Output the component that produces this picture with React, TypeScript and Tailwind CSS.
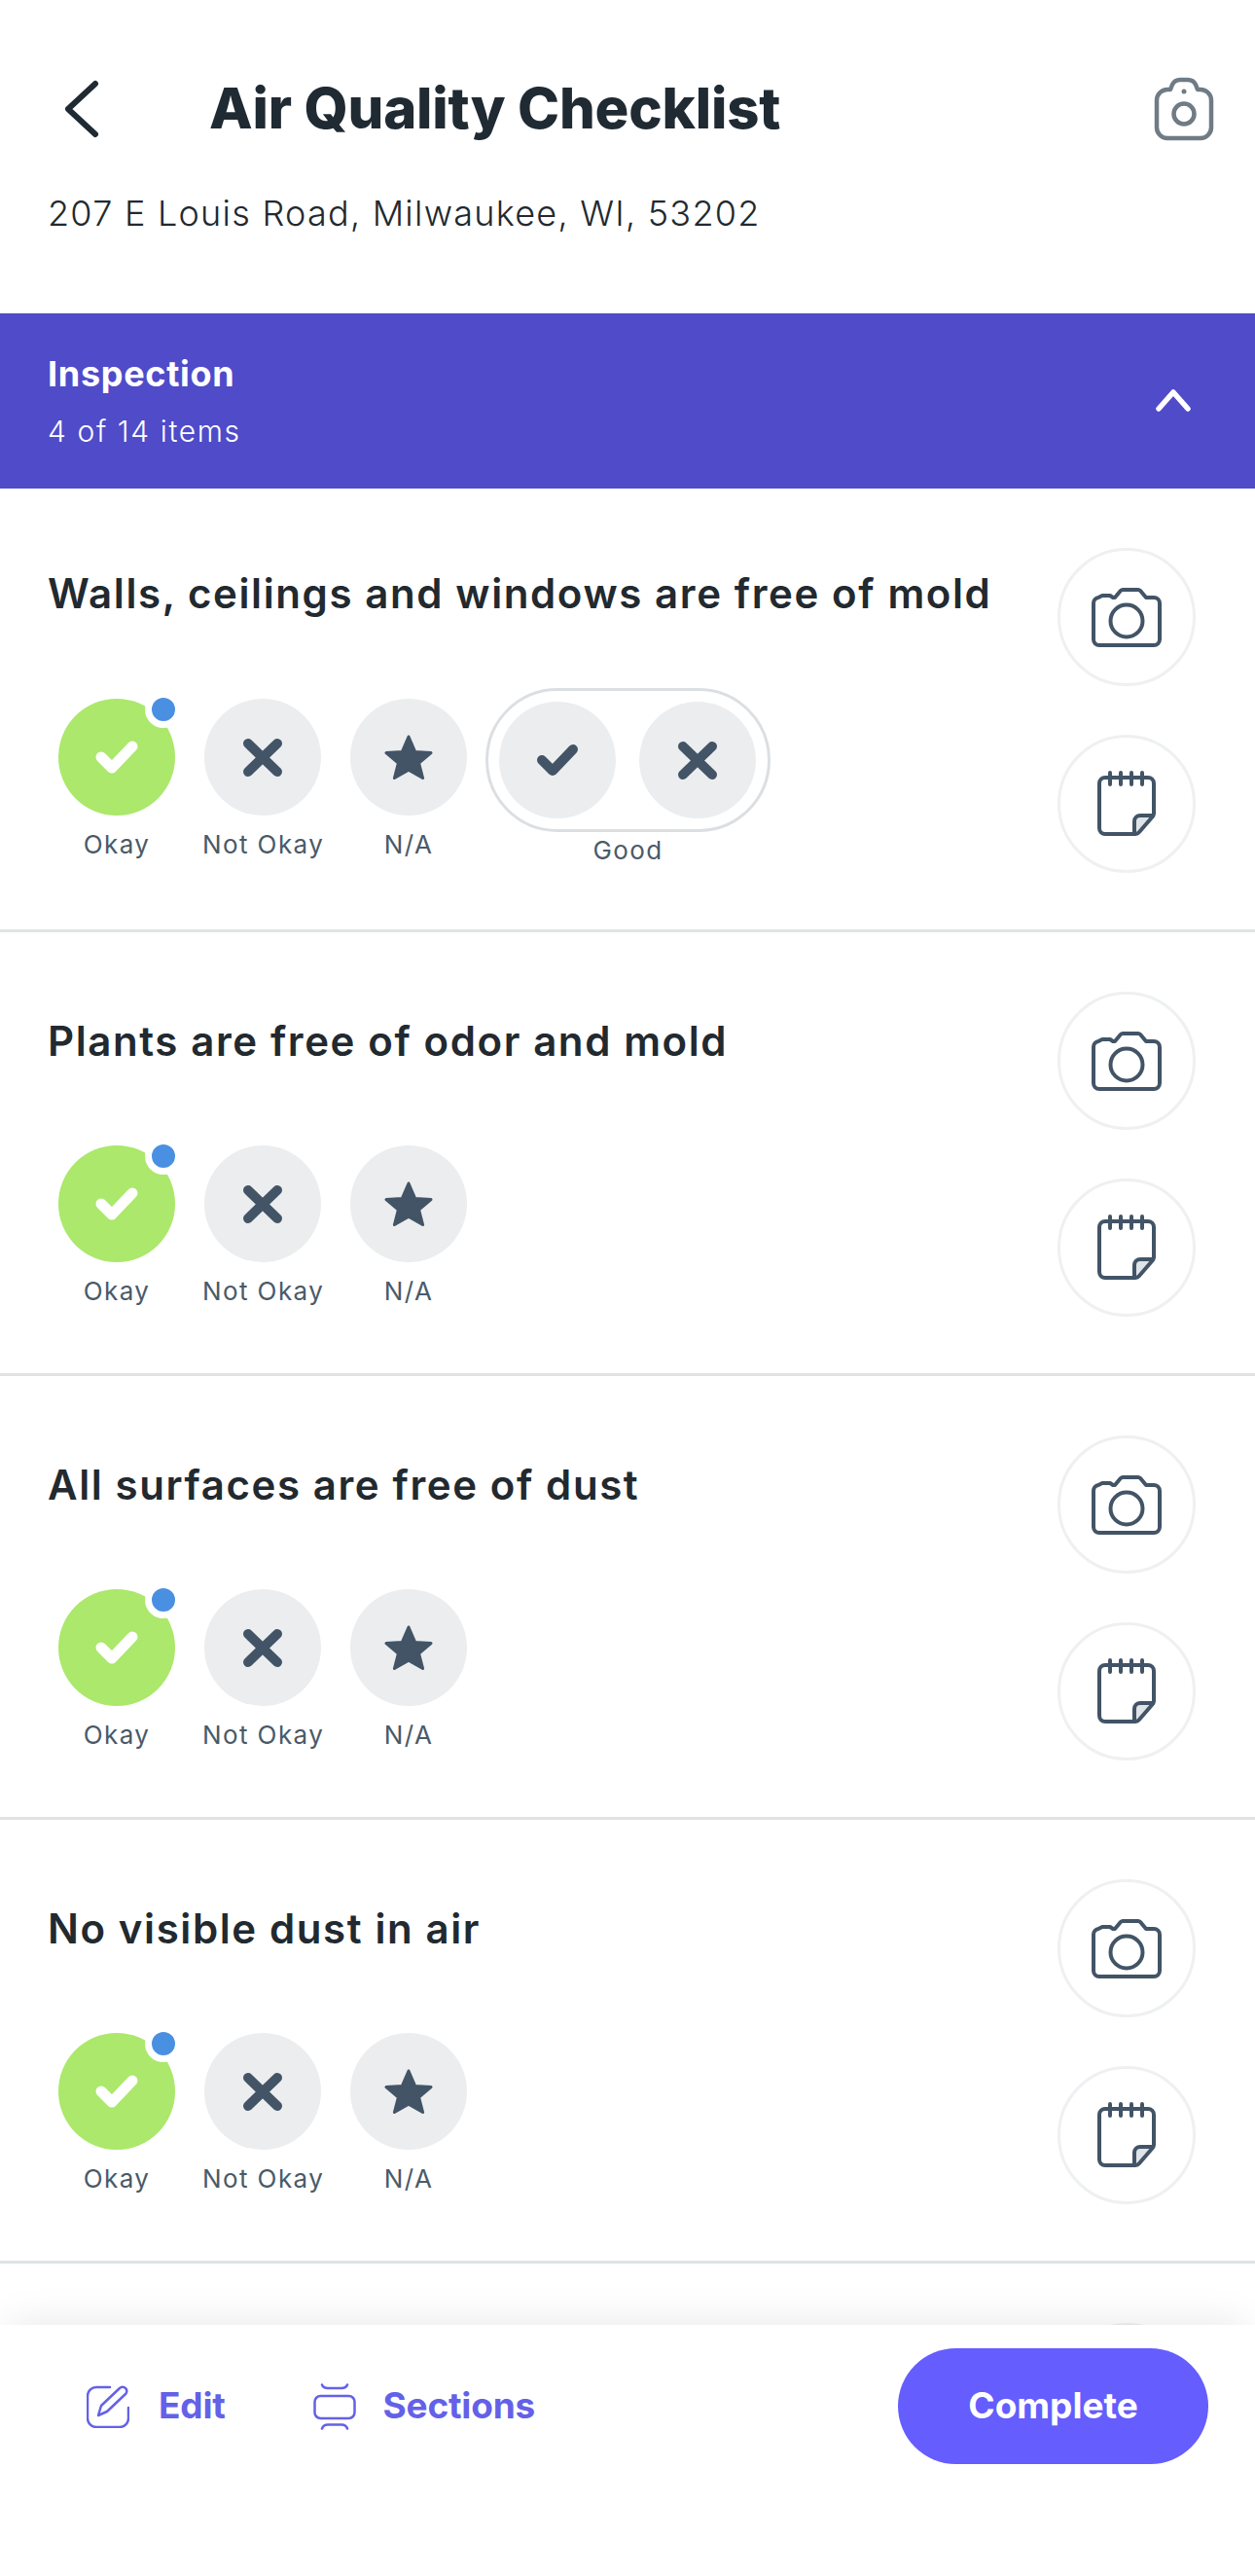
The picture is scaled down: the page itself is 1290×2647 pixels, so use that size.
import type { ReactNode } from 'react';

const font = "font-['Inter','Noto_Sans',sans-serif]";

function CameraIcon() {
  return (
    <svg width="72" height="61" viewBox="0 0 72 61" fill="none" stroke="#425466" strokeWidth="4" strokeLinejoin="round">
      <path d="M2 16a6 6 0 0 1 5-6l4-2h8l3 2h2l5-6a4 4 0 0 1 3-2h16a4 4 0 0 1 3 2l5 6h8a6 6 0 0 1 6 6v37a6 6 0 0 1-6 6H8a6 6 0 0 1-6-6z" />
      <circle cx="36" cy="34" r="16.5" />
    </svg>
  );
}

function NoteIcon() {
  return (
    <svg width="60" height="68" viewBox="0 0 60 68" fill="none" stroke="#425466" strokeWidth="4" strokeLinecap="round" strokeLinejoin="round">
      <path d="M38 65V52a6 6 0 0 1 6-6h14L42 64l-4 1z" fill="#dfe4e9" stroke="none" />
      <path d="M8 7h44a6 6 0 0 1 6 6v31a6 6 0 0 1-2 4L43 63a6 6 0 0 1-4 2H8a6 6 0 0 1-6-6V13a6 6 0 0 1 6-6z" />
      <path d="M38 64V52a6 6 0 0 1 6-6h13" />
      <path d="M13 2v12M24 2v12M35 2v12M46 2v12" />
    </svg>
  );
}

function CheckIcon({ color, width }: { color: string; width: number }) {
  return (
    <svg width="44" height="34" viewBox="0 0 44 34" fill="none" stroke={color} strokeWidth={width} strokeLinecap="round" strokeLinejoin="round">
      <path d="M6 17l11 11L38 6" />
    </svg>
  );
}

function CrossIcon() {
  return (
    <svg width="42" height="41" viewBox="0 0 42 41" fill="none" stroke="#425466" strokeWidth="10" strokeLinecap="round">
      <path d="M6 6l30 29M36 6L6 35" />
    </svg>
  );
}

function StarIcon() {
  return (
    <svg width="50" height="46" viewBox="0 0 50 46" fill="#425466" stroke="#425466" strokeWidth="3" strokeLinejoin="round">
      <path d="M25 2l6.6 15.4L48 18.6 35.6 29l4 15.5L25 36.2 10.4 44.500l4-15.5L2 18.600l16.400-1.200z" />
    </svg>
  );
}

function Circle({ children, green }: { children: ReactNode; green?: boolean }) {
  return (
    <div className={`w-[120px] h-[120px] rounded-full flex items-center justify-center ${green ? 'bg-[#abe86b]' : 'bg-[#ebedef]'}`}>
      {children}
    </div>
  );
}

function Label({ children }: { children: ReactNode }) {
  return <div className="mt-[14px] -ml-[2px] w-[124px] text-[26px] leading-[32px] tracking-[1.4px] text-[#4a5a68] text-center whitespace-nowrap">{children}</div>;
}

function RoundButton({ children }: { children: ReactNode }) {
  return (
    <div className="w-[142px] h-[142px] rounded-full border-[3px] border-[#eef0f2] flex items-center justify-center">
      {children}
    </div>
  );
}

function SideButtons() {
  return (
    <div className="pt-[61px] flex flex-col gap-[50px]">
      <RoundButton><CameraIcon /></RoundButton>
      <RoundButton><NoteIcon /></RoundButton>
    </div>
  );
}

function ItemCard({ title, titleTop, rowGap, good }: { title: string; titleTop: string; rowGap: string; good?: boolean }) {
  return (
    <div className="h-[456px] shrink-0 border-b-[3px] border-[#dfe3e6] flex justify-between pr-[61px]">
      <div className={titleTop}>
        <div className="pl-[49px] text-[42px] leading-[50px] font-semibold tracking-[1.6px] text-[#22292f] whitespace-nowrap">{title}</div>
        <div className={`${rowGap} pl-[60px] flex items-start`}>
          <div className="w-[120px] relative">
            <Circle green><CheckIcon color="#ffffff" width={11} /></Circle>
            <div className="absolute left-[89px] -top-[8px] w-[38px] h-[38px] rounded-full bg-[#4a90e2] border-[7px] border-white" />
            <Label>Okay</Label>
          </div>
          <div className="w-[120px] ml-[30px]">
            <Circle><CrossIcon /></Circle>
            <Label>Not Okay</Label>
          </div>
          <div className="w-[120px] ml-[30px]">
            <Circle><StarIcon /></Circle>
            <Label>N/A</Label>
          </div>
          {good && (
            <div className="ml-[19px] -mt-[11px]">
              <div className="w-[293px] h-[148px] rounded-full border-[3px] border-[#dcdfe2] flex items-center gap-[24px] pl-[11px]">
                <Circle><CheckIcon color="#425466" width={10} /></Circle>
                <Circle><CrossIcon /></Circle>
              </div>
              <div className="mt-[3px] text-[26px] leading-[32px] tracking-[1.4px] text-[#4a5a68] text-center">Good</div>
            </div>
          )}
        </div>
      </div>
      <SideButtons />
    </div>
  );
}

export default function App() {
  return (
    <div className={`${font} w-[1290px] h-[2647px] bg-white flex flex-col overflow-hidden`}>
      <header className="h-[322px] shrink-0 pt-[80px]">
        <div className="flex items-center pl-[65px] pr-[42px] h-[64px]">
          <svg width="38" height="60" viewBox="0 0 38 60" fill="none" stroke="#1f2a33" strokeWidth="6" strokeLinecap="round" strokeLinejoin="round">
            <path d="M33 4L5 30l28 26" />
          </svg>
          <h1 className="ml-[112px] -mt-[2px] flex-1 text-[58px] leading-[64px] font-extrabold tracking-[-0.2px] text-[#1f2a33] whitespace-nowrap">Air Quality Checklist</h1>
          <svg width="62" height="66" viewBox="0 0 62 66" fill="none" stroke="#6f7b85" strokeWidth="4.500" strokeLinejoin="round">
            <path d="M3 24a11 11 0 0 1 11-11h3l2-5a9 9 0 0 1 8-5h8a9 9 0 0 1 8 5l2 5h3a11 11 0 0 1 11 11v28a11 11 0 0 1-11 11H14A11 11 0 0 1 3 52z" />
            <circle cx="31" cy="38" r="10.500" />
            <circle cx="31" cy="15" r="2.500" fill="#6f7b85" stroke="none" />
          </svg>
        </div>
        <p className="mt-[53px] pl-[49px] text-[36px] leading-[44px] font-light tracking-[1.25px] text-[#22292f]">207 E Louis Road, Milwaukee, WI, 53202</p>
      </header>

      <div className="h-[180px] shrink-0 bg-[#4f4bc9] pl-[49px] pr-[66px] flex items-center justify-between">
        <div>
          <div className="text-[36px] leading-[44px] font-bold tracking-[0.7px] text-white">Inspection</div>
          <div className="mt-[18px] text-[30px] leading-[38px] font-light tracking-[1.6px] text-white">4 of 14 items</div>
        </div>
        <svg width="36" height="24" viewBox="0 0 36 24" fill="none" stroke="#ffffff" strokeWidth="5.500" strokeLinecap="round" strokeLinejoin="round" className="mt-[-2px]">
          <path d="M3 21L18 4l15 17" />
        </svg>
      </div>

      <main className="flex-1 min-h-0 overflow-hidden">
        <ItemCard title="Walls, ceilings and windows are free of mold" titleTop="pt-[83px]" rowGap="mt-[83px]" good />
        <ItemCard title="Plants are free of odor and mold" titleTop="pt-[87px]" rowGap="mt-[82px]" />
        <ItemCard title="All surfaces are free of dust" titleTop="pt-[87px]" rowGap="mt-[82px]" />
        <ItemCard title="No visible dust in air" titleTop="pt-[87px]" rowGap="mt-[82px]" />
        <div className="flex justify-end pr-[61px]"><SideButtons /></div>
      </main>

      <footer className="relative h-[258px] shrink-0 bg-white shadow-[0_-10px_40px_-10px_rgba(0,0,0,0.10)] pl-[89px] pr-[48px] pt-[24px] flex items-start justify-between">
        <div className="flex items-center h-[119px] text-[37px] font-bold tracking-[-0.2px] text-[#6461e8]">
          <svg width="44" height="44" viewBox="0 0 44 44" fill="none" stroke="#6461e8" strokeWidth="2.500" strokeLinecap="round" strokeLinejoin="round">
            <path d="M24 2H10a9 9 0 0 0-9 9v23a9 9 0 0 0 9 9h24a9 9 0 0 0 9-9V23" />
            <path d="M12 31l3-10L34 3a4 4 0 0 1 6 0 4 4 0 0 1 0 6L21 27z" />
          </svg>
          <span className="ml-[30px] -mt-[2px]">Edit</span>
          <svg width="44" height="48" viewBox="0 0 44 48" fill="none" stroke="#6461e8" strokeWidth="2.500" strokeLinecap="round" strokeLinejoin="round" className="ml-[90px]">
            <rect x="1.500" y="13" width="41" height="23" rx="6" />
            <path d="M9 1.500c1 2.500 3 3.500 6 3.500h14c3 0 5-1 6-3.500M9 46.500c1-3 3-4 6-4h14c3 0 5 1 6 4" />
          </svg>
          <span className="ml-[28px] -mt-[2px]">Sections</span>
        </div>
        <button className="w-[319px] h-[119px] rounded-full bg-[#655dfd] text-white text-[37px] font-bold pb-[2px]">Complete</button>
      </footer>
    </div>
  );
}
